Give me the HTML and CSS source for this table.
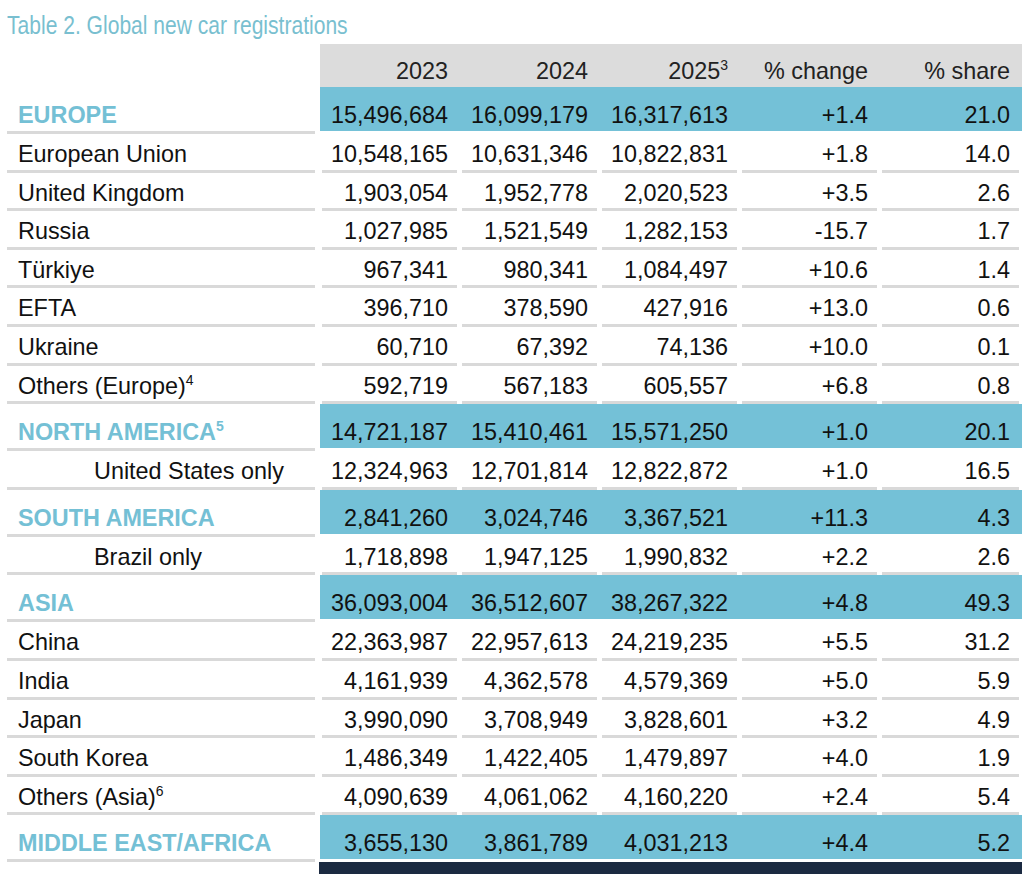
FILE: index.html
```html
<!DOCTYPE html>
<html lang="en">
<head>
<meta charset="utf-8">
<title>Table 2. Global new car registrations</title>
<link rel="stylesheet" href="styles.css">
</head>
<body>
<div class="page">
  <div class="title"><span class="title-text">Table 2. Global new car registrations</span></div>

  <div class="row head">
    <div class="label"></div>
    <div class="num"><div class="in">2023</div></div>
    <div class="num"><div class="in">2024</div></div>
    <div class="num"><div class="in">2025<sup>3</sup></div></div>
    <div class="num"><div class="in">% change</div></div>
    <div class="num"><div class="in">% share</div></div>
  </div>

  <div class="row region">
    <div class="label">EUROPE</div>
    <div class="num"><div class="in">15,496,684</div></div>
    <div class="num"><div class="in">16,099,179</div></div>
    <div class="num"><div class="in">16,317,613</div></div>
    <div class="num"><div class="in">+1.4</div></div>
    <div class="num"><div class="in">21.0</div></div>
  </div>
  <div class="row">
    <div class="label">European Union</div>
    <div class="num"><div class="in">10,548,165</div></div>
    <div class="num"><div class="in">10,631,346</div></div>
    <div class="num"><div class="in">10,822,831</div></div>
    <div class="num"><div class="in">+1.8</div></div>
    <div class="num"><div class="in">14.0</div></div>
  </div>
  <div class="row">
    <div class="label">United Kingdom</div>
    <div class="num"><div class="in">1,903,054</div></div>
    <div class="num"><div class="in">1,952,778</div></div>
    <div class="num"><div class="in">2,020,523</div></div>
    <div class="num"><div class="in">+3.5</div></div>
    <div class="num"><div class="in">2.6</div></div>
  </div>
  <div class="row">
    <div class="label">Russia</div>
    <div class="num"><div class="in">1,027,985</div></div>
    <div class="num"><div class="in">1,521,549</div></div>
    <div class="num"><div class="in">1,282,153</div></div>
    <div class="num"><div class="in">-15.7</div></div>
    <div class="num"><div class="in">1.7</div></div>
  </div>
  <div class="row">
    <div class="label">Türkiye</div>
    <div class="num"><div class="in">967,341</div></div>
    <div class="num"><div class="in">980,341</div></div>
    <div class="num"><div class="in">1,084,497</div></div>
    <div class="num"><div class="in">+10.6</div></div>
    <div class="num"><div class="in">1.4</div></div>
  </div>
  <div class="row">
    <div class="label">EFTA</div>
    <div class="num"><div class="in">396,710</div></div>
    <div class="num"><div class="in">378,590</div></div>
    <div class="num"><div class="in">427,916</div></div>
    <div class="num"><div class="in">+13.0</div></div>
    <div class="num"><div class="in">0.6</div></div>
  </div>
  <div class="row">
    <div class="label">Ukraine</div>
    <div class="num"><div class="in">60,710</div></div>
    <div class="num"><div class="in">67,392</div></div>
    <div class="num"><div class="in">74,136</div></div>
    <div class="num"><div class="in">+10.0</div></div>
    <div class="num"><div class="in">0.1</div></div>
  </div>
  <div class="row">
    <div class="label">Others (Europe)<sup>4</sup></div>
    <div class="num"><div class="in">592,719</div></div>
    <div class="num"><div class="in">567,183</div></div>
    <div class="num"><div class="in">605,557</div></div>
    <div class="num"><div class="in">+6.8</div></div>
    <div class="num"><div class="in">0.8</div></div>
  </div>

  <div class="row region">
    <div class="label">NORTH AMERICA<sup>5</sup></div>
    <div class="num"><div class="in">14,721,187</div></div>
    <div class="num"><div class="in">15,410,461</div></div>
    <div class="num"><div class="in">15,571,250</div></div>
    <div class="num"><div class="in">+1.0</div></div>
    <div class="num"><div class="in">20.1</div></div>
  </div>
  <div class="row">
    <div class="label indent">United States only</div>
    <div class="num"><div class="in">12,324,963</div></div>
    <div class="num"><div class="in">12,701,814</div></div>
    <div class="num"><div class="in">12,822,872</div></div>
    <div class="num"><div class="in">+1.0</div></div>
    <div class="num"><div class="in">16.5</div></div>
  </div>

  <div class="row region">
    <div class="label">SOUTH AMERICA</div>
    <div class="num"><div class="in">2,841,260</div></div>
    <div class="num"><div class="in">3,024,746</div></div>
    <div class="num"><div class="in">3,367,521</div></div>
    <div class="num"><div class="in">+11.3</div></div>
    <div class="num"><div class="in">4.3</div></div>
  </div>
  <div class="row">
    <div class="label indent">Brazil only</div>
    <div class="num"><div class="in">1,718,898</div></div>
    <div class="num"><div class="in">1,947,125</div></div>
    <div class="num"><div class="in">1,990,832</div></div>
    <div class="num"><div class="in">+2.2</div></div>
    <div class="num"><div class="in">2.6</div></div>
  </div>

  <div class="row region">
    <div class="label">ASIA</div>
    <div class="num"><div class="in">36,093,004</div></div>
    <div class="num"><div class="in">36,512,607</div></div>
    <div class="num"><div class="in">38,267,322</div></div>
    <div class="num"><div class="in">+4.8</div></div>
    <div class="num"><div class="in">49.3</div></div>
  </div>
  <div class="row">
    <div class="label">China</div>
    <div class="num"><div class="in">22,363,987</div></div>
    <div class="num"><div class="in">22,957,613</div></div>
    <div class="num"><div class="in">24,219,235</div></div>
    <div class="num"><div class="in">+5.5</div></div>
    <div class="num"><div class="in">31.2</div></div>
  </div>
  <div class="row">
    <div class="label">India</div>
    <div class="num"><div class="in">4,161,939</div></div>
    <div class="num"><div class="in">4,362,578</div></div>
    <div class="num"><div class="in">4,579,369</div></div>
    <div class="num"><div class="in">+5.0</div></div>
    <div class="num"><div class="in">5.9</div></div>
  </div>
  <div class="row">
    <div class="label">Japan</div>
    <div class="num"><div class="in">3,990,090</div></div>
    <div class="num"><div class="in">3,708,949</div></div>
    <div class="num"><div class="in">3,828,601</div></div>
    <div class="num"><div class="in">+3.2</div></div>
    <div class="num"><div class="in">4.9</div></div>
  </div>
  <div class="row">
    <div class="label">South Korea</div>
    <div class="num"><div class="in">1,486,349</div></div>
    <div class="num"><div class="in">1,422,405</div></div>
    <div class="num"><div class="in">1,479,897</div></div>
    <div class="num"><div class="in">+4.0</div></div>
    <div class="num"><div class="in">1.9</div></div>
  </div>
  <div class="row">
    <div class="label">Others (Asia)<sup>6</sup></div>
    <div class="num"><div class="in">4,090,639</div></div>
    <div class="num"><div class="in">4,061,062</div></div>
    <div class="num"><div class="in">4,160,220</div></div>
    <div class="num"><div class="in">+2.4</div></div>
    <div class="num"><div class="in">5.4</div></div>
  </div>

  <div class="row region">
    <div class="label">MIDDLE EAST/AFRICA</div>
    <div class="num"><div class="in">3,655,130</div></div>
    <div class="num"><div class="in">3,861,789</div></div>
    <div class="num"><div class="in">4,031,213</div></div>
    <div class="num"><div class="in">+4.4</div></div>
    <div class="num"><div class="in">5.2</div></div>
  </div>

  <div class="row total">
    <div class="label"></div>
    <div class="bar"></div>
  </div>
</div>
</body>
</html>
```

FILE: styles.css
```css
html, body {
  margin: 0;
  padding: 0;
  background: #ffffff;
}

body {
  font-family: "Liberation Sans", Arial, sans-serif;
  color: #111111;
  font-size: 23.4px;
  overflow: hidden;
}

.page {
  padding-left: 7px;
  width: 1015px;
}

.title {
  height: 44px;
  padding-top: 11px;
  box-sizing: border-box;
  line-height: 29px;
  white-space: nowrap;
}

.title-text {
  display: inline-block;
  font-size: 26px;
  color: #79bfd0;
  transform: scaleX(0.81);
  transform-origin: 0 50%;
}

.row {
  display: grid;
  grid-template-columns: 313px 140px 140px 140px 140px 142px;
  line-height: 26px;
}

sup {
  font-size: 14px;
  line-height: 0;
  vertical-align: 9px;
}

.label {
  margin-right: 5px;
  padding: 7px 0 2.6px 11px;
  border-bottom: 3px solid #d9d9d9;
  white-space: nowrap;
}

.label.indent {
  padding-left: 87px;
}

.num {
  padding: 0 3px 0 2px;
  text-align: right;
  white-space: nowrap;
}

.num .in {
  padding: 7px 9px 2.6px 0;
  border-bottom: 3px solid #d9d9d9;
}

/* header */
.head .label {
  border-bottom: none;
  padding: 0;
}

.head .num {
  background: #dcdcdc;
  color: #222222;
}

.head .num .in {
  border-bottom: none;
  padding: 14px 9px 3px 0;
}

/* region rows */
.region .label {
  padding-top: 15px;
  padding-bottom: 3px;
  color: #74c0d5;
  font-weight: bold;
}

.region .num {
  background: #74c1d7;
  border-bottom: 3px solid #ffffff;
}

.region .num .in {
  border-bottom: none;
  padding-top: 15px;
  padding-bottom: 3px;
}

/* total bar */
.total .label {
  border-bottom: none;
  padding: 0;
}

.total .bar {
  grid-column: 2 / 7;
  margin-left: -1px;
  height: 30px;
  background: #1b2a41;
}
```
